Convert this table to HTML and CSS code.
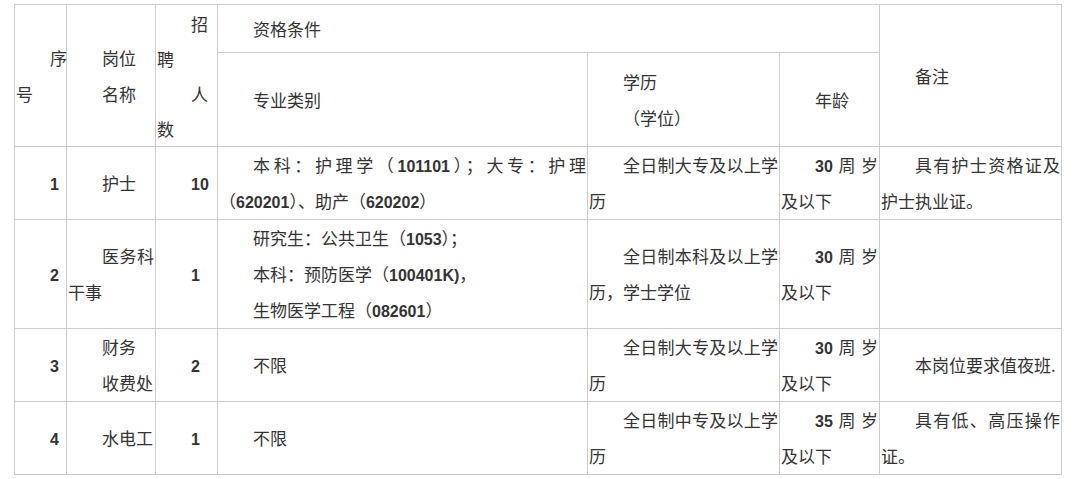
FILE: index.html
```html
<!DOCTYPE html>
<html lang="zh-CN">
<head>
<meta charset="utf-8">
<title>招聘岗位</title>
<link rel="stylesheet" href="styles.css">
</head>
<body>
<table class="jobs">
  <colgroup>
    <col class="c1"><col class="c2"><col class="c3"><col class="c4"><col class="c5"><col class="c6"><col class="c7">
  </colgroup>
  <tr class="h1">
    <td rowspan="2"><div class="p">序号</div></td>
    <td rowspan="2"><div class="p">岗位</div><div class="p">名称</div></td>
    <td rowspan="2" class="tight"><div class="p">招聘</div><div class="p">人数</div></td>
    <td colspan="3"><div class="p">资格条件</div></td>
    <td rowspan="2"><div class="p">备注</div></td>
  </tr>
  <tr class="h2">
    <td><div class="p">专业类别</div></td>
    <td><div class="p">学历</div><div class="p">（学位）</div></td>
    <td><div class="p">年龄</div></td>
  </tr>
  <tr class="r1">
    <td><div class="p"><span class="n">1</span></div></td>
    <td><div class="p">护士</div></td>
    <td><div class="p"><span class="n">10</span></div></td>
    <td><div class="p">本科：护理学（<span class="n">101101</span>）；大专：护理（<span class="n">620201</span>）、助产（<span class="n">620202</span>）</div></td>
    <td><div class="p">全日制大专及以上学历</div></td>
    <td><div class="p"><span class="n">30</span>周岁及以下</div></td>
    <td><div class="p">具有护士资格证及护士执业证。</div></td>
  </tr>
  <tr class="r2">
    <td><div class="p"><span class="n">2</span></div></td>
    <td><div class="p">医务科干事</div></td>
    <td><div class="p"><span class="n">1</span></div></td>
    <td><div class="p">研究生：公共卫生（<span class="n">1053</span>）；</div><div class="p">本科：预防医学（<span class="n">100401K)</span>，</div><div class="p">生物医学工程（<span class="n">082601</span>）</div></td>
    <td><div class="p">全日制本科及以上学历，学士学位</div></td>
    <td><div class="p"><span class="n">30</span>周岁及以下</div></td>
    <td></td>
  </tr>
  <tr class="r3">
    <td><div class="p"><span class="n">3</span></div></td>
    <td><div class="p">财务</div><div class="p">收费处</div></td>
    <td><div class="p"><span class="n">2</span></div></td>
    <td><div class="p">不限</div></td>
    <td><div class="p">全日制大专及以上学历</div></td>
    <td><div class="p"><span class="n">30</span>周岁及以下</div></td>
    <td><div class="p">本岗位要求值夜班.</div></td>
  </tr>
  <tr class="r4">
    <td><div class="p"><span class="n">4</span></div></td>
    <td><div class="p">水电工</div></td>
    <td><div class="p"><span class="n">1</span></div></td>
    <td><div class="p">不限</div></td>
    <td><div class="p">全日制中专及以上学历</div></td>
    <td><div class="p"><span class="n">35</span>周岁及以下</div></td>
    <td><div class="p">具有低、高压操作证。</div></td>
  </tr>
</table>
</body>
</html>
```
FILE: styles.css
```css
html, body {
  margin: 0;
  background: #fff;
}
body {
  padding: 4px 0 0 14px;
  font-family: "Noto Sans CJK SC", "Noto Sans", sans-serif;
  font-size: 17px;
  color: #333;
}
.jobs {
  border-collapse: collapse;
  table-layout: fixed;
  width: 1048px;
}
.c1 { width: 52px; }
.c2 { width: 89px; }
.c3 { width: 62px; }
.c4 { width: 370px; }
.c5 { width: 192px; }
.c6 { width: 100px; }
.c7 { width: 182px; }
.jobs td {
  border: 1px solid #ccc;
  padding: 0 1px;
  vertical-align: middle;
  line-height: 36px;
}
.p {
  text-indent: 2em;
  text-align: justify;
  line-height: 36px;
}
.tight .p {
  line-height: 35px;
}
.n {
  font-family: "Liberation Sans", Arial, sans-serif;
  font-weight: bold;
  font-size: 16px;
  line-height: 1;
}
.h1 { height: 48px; }
.h2 { height: 94px; }
.r1 { height: 73px; }
.r2 { height: 106px; }
.r3 { height: 71px; }
.r4 { height: 71px; }
```
